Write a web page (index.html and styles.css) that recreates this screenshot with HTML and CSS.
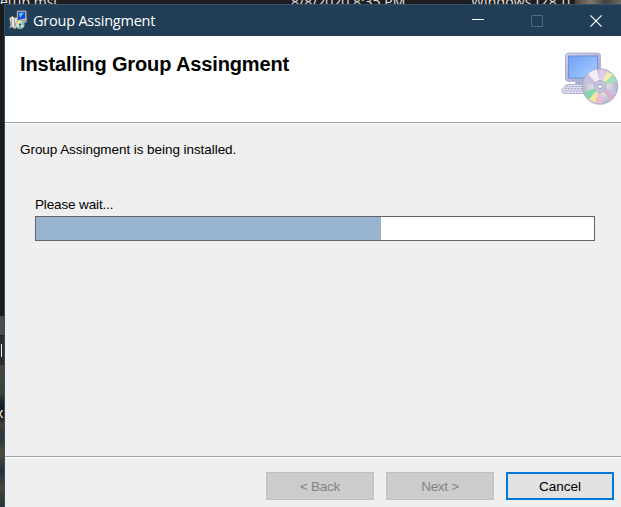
FILE: index.html
```
<!DOCTYPE html>
<html lang="en">
<head>
<meta charset="utf-8">
<title>Group Assingment</title>
<link rel="stylesheet" href="styles.css">
</head>
<body>
<div class="desktop">
  <div class="behind-top">
    <span class="file-name">etup.msi</span>
    <span class="file-date">8/8/2020 8:35 PM</span>
    <span class="file-type">Windows I</span>
    <span class="file-size">28.0</span>
    <span class="rock"></span>
  </div>
  <div class="behind-left">
    <span class="strip-dark"></span>
    <span class="strip-row"></span>
    <span class="strip-caret"></span>
    <span class="strip-photo"><b class="letter">x</b></span>
  </div>
  <main class="window">
    <header class="titlebar">
      <svg class="app-icon" width="19" height="20" viewBox="0 0 19 20">
        <path d="M8 1l9-.5 1 9.500-10 2z" fill="#d2d0c6" stroke="#77746c" stroke-width=".7"/>
        <path d="M9 2l7-.5.5 7L9 10z" fill="#1648d8"/>
        <path d="M10 3l5-.5-4 5.500z" fill="#4fd0f4"/>
        <path d="M12 11l5-1 1 2-6 3z" fill="#aaa89f"/>
        <path d="M.5 8l3-2 2 2 3-1v10l-3 2-2-2-3 1 1-3z" fill="#e2e1da" stroke="#77756e" stroke-width=".6"/>
        <path d="M2.500 8.500v8M5.500 9v8" stroke="#8f8d86" stroke-width=".7"/>
        <circle cx="11" cy="14.500" r="4.500" fill="#d6dccb" stroke="#697373" stroke-width=".6"/>
        <path d="M11 14.500L7.500 12l3-2z" fill="#f2e76a"/>
        <path d="M11 14.500l3.500-3 .5 4z" fill="#63cbd0"/>
        <path d="M11 14.500l2 4-4 .3z" fill="#4fb5a8"/>
        <circle cx="11" cy="14.500" r="1" fill="#264158"/>
      </svg>
      <span class="title">Group Assingment</span>
      <div class="controls">
        <svg width="12" height="12"><path d="M0 4.500h12" stroke="#fff"/></svg>
        <svg width="12" height="12"><path d="M.5.5h11v11H.5z" fill="none" stroke="#50687b"/></svg>
        <svg width="12" height="12"><path d="M.4.4l11.200 11.200M11.600.4L.4 11.600" stroke="#fff" stroke-width="1.200"/></svg>
      </div>
    </header>
    <section class="banner">
      <h1>Installing Group Assingment</h1>
      <svg class="disc-icon" width="58" height="54" viewBox="0 0 58 54">
        <defs>
          <linearGradient id="screen" x1="0" y1="0" x2="1" y2="1"><stop stop-color="#6f9ff5"/><stop offset="1" stop-color="#a9d0ff"/></linearGradient>
          <linearGradient id="frame" x1="0" y1="0" x2="1" y2="1"><stop stop-color="#d0d2e8"/><stop offset="1" stop-color="#9a9cc4"/></linearGradient>
          <radialGradient id="disc"><stop offset=".15" stop-color="#eeeef6"/><stop offset=".7" stop-color="#cbcbd9"/><stop offset="1" stop-color="#b4b4ca"/></radialGradient>
        </defs>
        <path d="M15 29h13l3 5H13z" fill="#a7a9cb"/>
        <rect x="4.500" y="1" width="35" height="28.500" rx="3" fill="url(#frame)" stroke="#b3b4d2"/>
        <rect x="7.500" y="4" width="29" height="22" fill="url(#screen)" stroke="#6f90dc"/>
        <path d="M5 32.500h28v6l-5 3H3q-3-1-2-4z" fill="#dedfee" stroke="#b4b5d0"/>
        <path d="M5 34.500h22M4 36.700h22M3 39h21" stroke="#a2a5c3" stroke-width="1" stroke-dasharray="2 1"/>
        <circle cx="39" cy="34.500" r="17.700" fill="url(#disc)" stroke="#adaec8"/>
        <path d="M39 34.500L27 22q4-4 9-4.500z" fill="#f2eef5"/>
        <path d="M39 34.500L38 17.500l7 1z" fill="#e6c8ec"/>
        <path d="M39 34.500L46 19l6 4z" fill="#f0ecb0"/>
        <path d="M39 34.500L52 23l3.500 6z" fill="#a4e0bb"/>
        <path d="M39 34.500L22.500 30q1-4 4-7z" fill="#c9c0de"/>
        <path d="M39 34.500l-16 6q2 5 5 7z" fill="#7fd8ae"/>
        <path d="M39 34.500L28 47.500l6 3.500z" fill="#f0e8a0"/>
        <path d="M39 34.500L34.500 51l7 .5z" fill="#eebbd4"/>
        <path d="M39 34.500L49 48l4-4z" fill="#dfb0c4"/>
        <path d="M39 34.500L53 44l2.500-5z" fill="#c9bedf"/>
        <circle cx="39" cy="34.500" r="5.800" fill="#c6c9dc" stroke="#a6abc3"/>
        <circle cx="39" cy="34.500" r="2.300" fill="#f4f4f8" stroke="#9299b3"/>
      </svg>
    </section>
    <section class="content">
      <p class="message">Group Assingment is being installed.</p>
      <div class="status">
        <p class="wait">Please wait...</p>
        <div class="progress"><div class="fill"></div></div>
      </div>
    </section>
    <footer class="footer">
      <button class="btn" disabled><span class="back">&lt; Back</span></button>
      <button class="btn" disabled><span class="next">Next &gt;</span></button>
      <button class="btn primary"><span class="cancel">Cancel</span></button>
    </footer>
  </main>
</div>
</body>
</html>
```
FILE: styles.css
```
* { box-sizing: border-box; }
body { margin: 0; overflow: hidden; font-family: "Liberation Sans", Arial, sans-serif; }
h1, p { margin: 0; font-weight: 400; white-space: nowrap; }
.desktop {
  width: 621px; height: 507px; overflow: hidden; background: #1d1d1d;
  display: grid; grid-template: 4px 503px / 4px 617px;
}
.behind-top {
  grid-column: 1 / 3; display: flex; overflow: hidden; background: #1e1e1e;
  color: #e4e4e4; font: 14px/16px "Open Sans", sans-serif; white-space: nowrap;
}
.behind-top span { flex: none; height: 16px; margin-top: -6px; }
.file-name { width: 291px; }
.file-date { width: 180px; }
.file-type { width: 69px; letter-spacing: .15px; }
.file-size { width: 35px; letter-spacing: .8px; }
.behind-top .rock { flex: 1; background: linear-gradient(90deg, #4b4339, #82766a, #3f4143, #70675d); }
.behind-left { display: flex; flex-direction: column; overflow: hidden; }
.strip-dark { height: 312px; background: #1c1c1c; }
.strip-row { height: 20px; background: #4c4c4c; border-bottom: 1px solid #202020; }
.strip-caret { height: 29px; background: #2d2d2d; padding: 8px 0 0 1px; }
.strip-caret::before { content: ""; display: block; width: 1px; height: 13px; background: #eee; }
.strip-photo {
  flex: 1; overflow: hidden;
  background: linear-gradient(#4a4638, #3b4339 20%, #171c20 28%, #15171a 36%, #49422f 42%, #263640 50%, #514a37 62%, #24333d 74%, #494333 86%, #2b3535);
}
.letter { display: block; margin: 38px 0 0 -4px; color: #fff; font: 14px/20px "Open Sans", sans-serif; }
.window { border-top: 1px solid #345168; border-left: 1px solid #294e6c; background: #efefef; display: flex; flex-direction: column; }
.titlebar { height: 31px; flex: none; background: #213e56; color: #fff; display: flex; align-items: center; padding-left: 4px; }
.app-icon { margin-top: -1px; flex: none; }
.title { margin-left: 5px; font: 14.5px/20px "Open Sans", sans-serif; letter-spacing: -.22px; white-space: nowrap; }
.controls { display: flex; gap: 47px; margin-left: auto; margin-right: 19px; }
.controls svg { display: block; }
.banner { height: 88px; flex: none; background: #fff; border-bottom: 1px solid #fff; box-shadow: inset 0 -1px #a0a0a0; display: flex; justify-content: space-between; padding: 16px 2px 0 15px; }
h1 { font-size: 20px; line-height: 24px; font-weight: 700; letter-spacing: -.13px; }
.disc-icon { flex: none; }
.content { flex: 1; padding: 17px 26px 0 15px; font-size: 13.5px; line-height: 18px; letter-spacing: -.06px; color: #000; }
.status { margin: 37px 0 0 15px; }
.wait { letter-spacing: -.14px; }
.progress { height: 25px; margin-top: 2px; border: 1px solid #646464; background: #fff; }
.fill { width: 345px; height: 100%; background: #99b4d1; }
.footer { height: 51px; flex: none; border-top: 1px solid #a0a0a0; box-shadow: inset 0 1px #fff; display: flex; justify-content: flex-end; gap: 12px; padding: 15px 7px 0 0; }
.btn { width: 108px; height: 28px; padding: 1px 0 0; border: 1px solid #bfbfbf; background: #ccc; color: #838383; font: 13.5px/18px "Liberation Sans", Arial, sans-serif; }
.btn.primary { border: 2px solid #0078d7; background: #e1e1e1; color: #000; }
.back, .next { letter-spacing: -.3px; }
```
